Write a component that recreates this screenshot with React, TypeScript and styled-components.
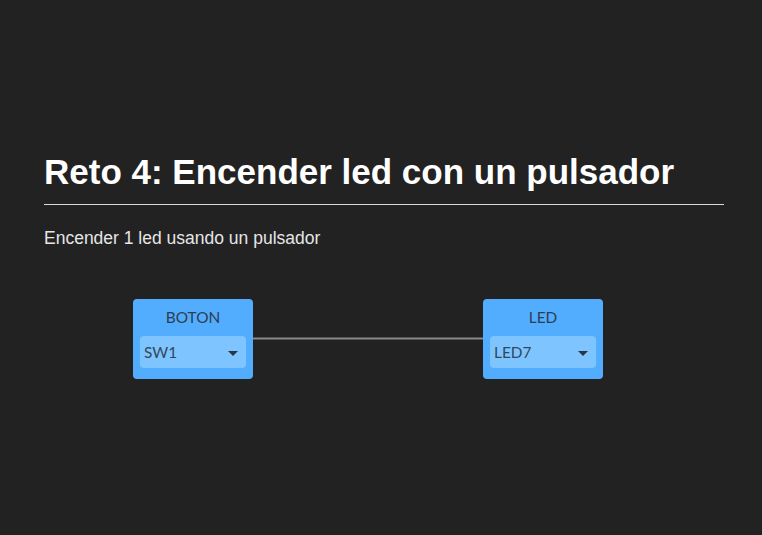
import React from 'react'
import styled, { createGlobalStyle } from 'styled-components'

const GlobalStyle = createGlobalStyle`
  html, body {
    margin: 0;
    padding: 0;
    background: #222222;
  }
  body {
    font-family: "Liberation Sans", Arial, sans-serif;
    color: #ffffff;
  }
`

const Page = styled.div`
  width: 762px;
  height: 535px;
  box-sizing: border-box;
  padding: 152px 38px 0 44px;
`

const Title = styled.h1`
  margin: 0;
  font-size: 35px;
  font-weight: 700;
  line-height: 40px;
  color: #ffffff;
`

const Rule = styled.hr`
  margin: 12px 0 0 0;
  border: none;
  height: 1px;
  background: #d9d9d9;
`

const Description = styled.p`
  margin: 23px 0 0 0;
  font-size: 17.5px;
  line-height: 20px;
  color: #e6e6e6;
`

const Canvas = styled.div`
  position: relative;
  height: 140px;
  margin-top: 32px;
`

const Wire = styled.svg`
  position: absolute;
  left: 0;
  top: 0;
  width: 100%;
  height: 100%;
`

const Node = styled.div<{ $x: number }>`
  position: absolute;
  top: 19px;
  left: ${(p) => p.$x}px;
  width: 120px;
  height: 80px;
  box-sizing: border-box;
  padding: 9px 7px 0 7px;
  background: #52adff;
  border-radius: 4px;
  font-family: Lato, "Liberation Sans", sans-serif;
  display: flex;
  flex-direction: column;
  align-items: stretch;
`

const NodeLabel = styled.div`
  text-align: center;
  font-size: 15.4px;
  line-height: 18px;
  color: #2d3e50;
`

const Select = styled.div`
  margin-top: 10px;
  height: 32px;
  box-sizing: border-box;
  padding: 0 8px 0 4px;
  border-radius: 4px;
  background: #7ec5ff;
  display: flex;
  align-items: center;
  justify-content: space-between;
  font-size: 15.4px;
  color: #33475b;
`

const Caret = styled.span`
  width: 0;
  height: 0;
  border-left: 5px solid transparent;
  border-right: 5px solid transparent;
  border-top: 5px solid #2a3544;
  margin-top: 2px;
`

function GraphNode({ x, label, value }: { x: number; label: string; value: string }) {
  return (
    <Node $x={x}>
      <NodeLabel>{label}</NodeLabel>
      <Select>
        <span>{value}</span>
        <Caret />
      </Select>
    </Node>
  )
}

export default function App() {
  return (
    <>
      <GlobalStyle />
      <Page>
        <Title>Reto 4: Encender led con un pulsador</Title>
        <Rule />
        <Description>Encender 1 led usando un pulsador</Description>
        <Canvas>
          <Wire>
            <line x1="209" y1="58.5" x2="439" y2="58.5" stroke="#8a8a8a" strokeWidth="2" />
          </Wire>
          <GraphNode x={89} label="BOTON" value="SW1" />
          <GraphNode x={439} label="LED" value="LED7" />
        </Canvas>
      </Page>
    </>
  )
}
